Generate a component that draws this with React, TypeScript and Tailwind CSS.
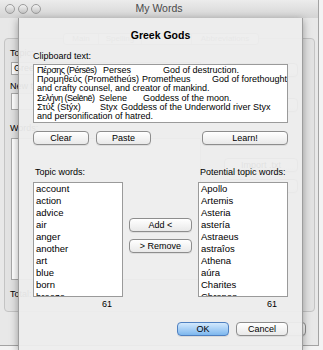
import React from "react";

// tab-separated clipboard text, column widths in px (last column runs free)
const clipLines: { cols: string[]; widths: number[]; tight?: boolean }[] = [
  { cols: ["Πέρσης (Pérsēs)", "Perses", "God of destruction."], widths: [66, 60], tight: true },
  { cols: ["Προμηθεύς (Promētheús)", "Prometheus", "God of forethought"], widths: [105, 70] },
  { cols: ["and crafty counsel, and creator of mankind."], widths: [] },
  { cols: ["Σελήνη (Selēnē)", "Selene", "Goddess of the moon."], widths: [62, 44], tight: true },
  { cols: ["Στύξ (Stýx)", "Styx", "Goddess of the Underworld river Styx"], widths: [63, 21] },
  { cols: ["and personification of hatred."], widths: [] },
];

const topicWords = ["account", "action", "advice", "air", "anger", "another", "art", "blue", "born", "breeze"];
const potentialWords = ["Apollo", "Artemis", "Asteria", "astería", "Astraeus", "astraîos", "Athena", "aúra", "Charites", "Chronos"];

function Btn({ children, className = "" }: { children?: React.ReactNode; className?: string }) {
  return (
    <div
      className={
        "h-[14px] rounded-[4px] border border-[#8d8d8d] bg-gradient-to-b from-white to-[#e9e9e9] text-[9px] leading-[12px] text-black flex items-center justify-center shadow-[0_1px_0_rgba(0,0,0,0.07)] " +
        className
      }
    >
      {children}
    </div>
  );
}

function WordList({ words }: { words: string[] }) {
  return (
    <div className="w-[90px] h-[115px] border border-[#9a9a9a] bg-white overflow-hidden pl-[2px]">
      {words.map((w) => (
        <div key={w} className="text-[9.5px] leading-[12px] text-black whitespace-nowrap">
          {w}
        </div>
      ))}
    </div>
  );
}

export default function App() {
  return (
    <div className="relative w-[323px] h-[350px] overflow-hidden bg-[#f3f3f3] font-['Liberation_Sans',sans-serif]">
      {/* background window */}
      <div className="w-[319px] h-[346px] bg-[#e8e8e8] border-r border-b border-[#a3a3a3]">
        {/* title bar */}
        <div className="relative h-[18px] bg-gradient-to-b from-[#ececec] to-[#d4d4d4] flex items-center pl-[5px] gap-[3px]">
          <span className="w-[10px] h-[10px] rounded-full border border-[#9c9c9c] bg-gradient-to-b from-[#f2f2f2] to-[#c4c4c4]" />
          <span className="w-[10px] h-[10px] rounded-full border border-[#9c9c9c] bg-gradient-to-b from-[#f2f2f2] to-[#c4c4c4]" />
          <span className="w-[10px] h-[10px] rounded-full border border-[#9c9c9c] bg-gradient-to-b from-[#f2f2f2] to-[#c4c4c4]" />
          <span className="absolute inset-0 flex items-center justify-center text-[10.5px] text-[#4a4a4a]">My Words</span>
        </div>
        {/* tab box */}
        <div className="relative mt-[20px] ml-[4px] w-[311px] h-[274px] rounded-[4px] border border-[#c4c4c4] bg-[#e2e2e2] flex">
          <div className="absolute -top-[6px] left-[58px] h-[12px] flex rounded-[3px] border border-[#b5b5b5] bg-[#f3f3f3] text-[8px] text-[#777] leading-[10px]">
            <span className="w-[35px] text-center border-r border-[#c5c5c5]">Main</span>
            <span className="w-[43px] text-center border-r border-[#c5c5c5]">Spelling</span>
            <span className="w-[50px] border-r border-[#c5c5c5]" />
            <span className="w-[66px] text-center">Abbreviations</span>
          </div>
          <div className="w-[200px] pl-[5px] pt-[8px] flex flex-col text-[9px] text-black">
            <div className="leading-[12px]">Topic:</div>
            <div className="mt-[3px] ml-[1px] h-[13px] w-[190px] border border-[#a9a9a9] bg-white text-[9px] leading-[11px] pl-[2px]">Greek Gods</div>
            <div className="mt-[5px] leading-[12px]">New topic:</div>
            <div className="mt-[1px] ml-[1px] h-[17px] w-[190px] border border-[#a9a9a9] bg-white" />
            <div className="mt-[12px] leading-[12px]">Words:</div>
            <div className="mt-[4px] ml-[1px] h-[142px] w-[190px] border border-[#a9a9a9] bg-white" />
            <div className="mt-[8px] leading-[12px]">Total:</div>
          </div>
          <div className="ml-auto mr-[16px] pt-[24px] flex flex-col w-[74px]">
            <Btn className="h-[11px]" />
            <Btn className="mt-[21px] h-[11px]" />
            <Btn className="mt-[46px]">Import .txt</Btn>
            <Btn className="mt-[7px]">Export .txt</Btn>
          </div>
        </div>
        <div className="mt-[10px] flex justify-end pr-[12px]">
          <Btn className="w-[60px]" />
        </div>
      </div>

      {/* sheet */}
      <div className="absolute left-[18px] top-[18px] w-[285px] h-[332px] bg-[#ededed]/[0.95] border-l border-r border-[#9d9d9d] shadow-[0_2px_8px_rgba(0,0,0,0.35)] px-[14px] flex flex-col text-black">
        <div className="pt-[10px] h-[24px] text-center text-[10.5px] font-bold leading-[14px]">Greek Gods</div>
        <div className="mt-[8px] h-[12px] text-[9px] leading-[12px]">Clipboard text:</div>
        <div className="mt-[2px] h-[59px] border border-[#9a9a9a] bg-white px-[3px] pt-[1px] overflow-hidden">
          {clipLines.map((l, i) => (
            <div key={i} className="flex whitespace-nowrap text-[9px] leading-[9.2px]">
              {l.cols.map((c, j) => (
                <span
                  key={j}
                  className={"shrink-0 " + (j === 0 && l.tight ? "tracking-[-0.5px]" : "")}
                  style={j < l.widths.length ? { width: l.widths[j] } : undefined}
                >
                  {c}
                </span>
              ))}
            </div>
          ))}
        </div>
        <div className="mt-[8px] flex">
          <Btn className="w-[56px]">Clear</Btn>
          <Btn className="w-[55px] ml-[7px]">Paste</Btn>
          <Btn className="w-[86px] ml-auto">Learn!</Btn>
        </div>
        <div className="mt-[21px] flex text-[9px] leading-[12px]">
          <span className="pl-[2px]">Topic words:</span>
          <span className="ml-auto w-[90px] pl-[2px] whitespace-nowrap">Potential topic words:</span>
        </div>
        <div className="mt-[4px] flex">
          <WordList words={topicWords} />
          <div className="flex-1 px-[6px] pt-[36px] flex flex-col">
            <Btn>Add &lt;</Btn>
            <Btn className="mt-[7px]">&gt; Remove</Btn>
          </div>
          <WordList words={potentialWords} />
        </div>
        <div className="mt-[1px] flex text-[9px] leading-[12px]">
          <span className="w-[90px] text-right pr-[11px]">61</span>
          <span className="ml-auto w-[90px] text-right pr-[11px]">61</span>
        </div>
        <div className="mt-[12px] flex justify-end gap-[7px]">
          <div className="w-[52px] h-[14px] rounded-[4px] border border-[#4f80c0] bg-gradient-to-b from-[#d3e9fd] to-[#7db7ee] text-[9px] leading-[12px] flex items-center justify-center shadow-[0_1px_0_rgba(0,0,0,0.08)]">
            OK
          </div>
          <Btn className="w-[52px]">Cancel</Btn>
        </div>
      </div>
    </div>
  );
}
